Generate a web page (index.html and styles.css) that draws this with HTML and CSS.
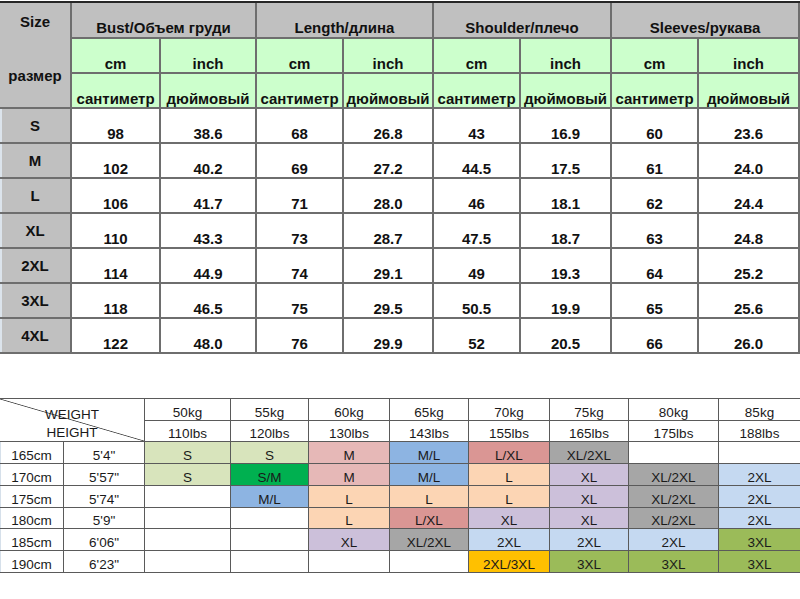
FILE: index.html
```html
<!DOCTYPE html>
<html>
<head>
<meta charset="utf-8">
<link rel="stylesheet" href="styles.css">
</head>
<body>
<div class="size-table">
  <div class="c-size"><span>Size</span><span>размер</span></div>
  <div class="c-group">Bust/Объем груди</div>
  <div class="c-group">Length/длина</div>
  <div class="c-group">Shoulder/плечо</div>
  <div class="c-group">Sleeves/рукава</div>
  <div class="c-unit">cm</div><div class="c-unit">inch</div>
  <div class="c-unit">cm</div><div class="c-unit">inch</div>
  <div class="c-unit">cm</div><div class="c-unit">inch</div>
  <div class="c-unit">cm</div><div class="c-unit">inch</div>
  <div class="c-unit">сантиметр</div><div class="c-unit">дюймовый</div>
  <div class="c-unit">сантиметр</div><div class="c-unit">дюймовый</div>
  <div class="c-unit">сантиметр</div><div class="c-unit">дюймовый</div>
  <div class="c-unit">сантиметр</div><div class="c-unit">дюймовый</div>

  <div class="c-label">S</div><div class="c-num">98</div><div class="c-num">38.6</div><div class="c-num">68</div><div class="c-num">26.8</div><div class="c-num">43</div><div class="c-num">16.9</div><div class="c-num">60</div><div class="c-num">23.6</div>
  <div class="c-label">M</div><div class="c-num">102</div><div class="c-num">40.2</div><div class="c-num">69</div><div class="c-num">27.2</div><div class="c-num">44.5</div><div class="c-num">17.5</div><div class="c-num">61</div><div class="c-num">24.0</div>
  <div class="c-label">L</div><div class="c-num">106</div><div class="c-num">41.7</div><div class="c-num">71</div><div class="c-num">28.0</div><div class="c-num">46</div><div class="c-num">18.1</div><div class="c-num">62</div><div class="c-num">24.4</div>
  <div class="c-label">XL</div><div class="c-num">110</div><div class="c-num">43.3</div><div class="c-num">73</div><div class="c-num">28.7</div><div class="c-num">47.5</div><div class="c-num">18.7</div><div class="c-num">63</div><div class="c-num">24.8</div>
  <div class="c-label">2XL</div><div class="c-num">114</div><div class="c-num">44.9</div><div class="c-num">74</div><div class="c-num">29.1</div><div class="c-num">49</div><div class="c-num">19.3</div><div class="c-num">64</div><div class="c-num">25.2</div>
  <div class="c-label">3XL</div><div class="c-num">118</div><div class="c-num">46.5</div><div class="c-num">75</div><div class="c-num">29.5</div><div class="c-num">50.5</div><div class="c-num">19.9</div><div class="c-num">65</div><div class="c-num">25.6</div>
  <div class="c-label">4XL</div><div class="c-num">122</div><div class="c-num">48.0</div><div class="c-num">76</div><div class="c-num">29.9</div><div class="c-num">52</div><div class="c-num">20.5</div><div class="c-num">66</div><div class="c-num">26.0</div>
</div>

<div class="wh-table">
  <div class="w-corner"><span>WEIGHT</span><span>HEIGHT</span></div>
  <div class="w">50kg</div><div class="w">55kg</div><div class="w">60kg</div><div class="w">65kg</div><div class="w">70kg</div><div class="w">75kg</div><div class="w">80kg</div><div class="w">85kg</div>
  <div class="w">110lbs</div><div class="w">120lbs</div><div class="w">130lbs</div><div class="w">143lbs</div><div class="w">155lbs</div><div class="w">165lbs</div><div class="w">175lbs</div><div class="w">188lbs</div>

  <div class="w first">165cm</div><div class="w">5'4"</div>
  <div class="w s">S</div><div class="w s">S</div><div class="w m">M</div><div class="w ml">M/L</div><div class="w lxl">L/XL</div><div class="w xl2">XL/2XL</div><div class="w"></div><div class="w"></div>

  <div class="w first">170cm</div><div class="w">5'57"</div>
  <div class="w s">S</div><div class="w sm">S/M</div><div class="w m">M</div><div class="w ml">M/L</div><div class="w l">L</div><div class="w xl">XL</div><div class="w xl2">XL/2XL</div><div class="w x2">2XL</div>

  <div class="w first">175cm</div><div class="w">5'74"</div>
  <div class="w"></div><div class="w ml">M/L</div><div class="w l">L</div><div class="w l">L</div><div class="w l">L</div><div class="w xl">XL</div><div class="w xl2">XL/2XL</div><div class="w x2">2XL</div>

  <div class="w first">180cm</div><div class="w">5'9"</div>
  <div class="w"></div><div class="w"></div><div class="w l">L</div><div class="w lxl">L/XL</div><div class="w xl">XL</div><div class="w xl">XL</div><div class="w xl2">XL/2XL</div><div class="w x2">2XL</div>

  <div class="w first">185cm</div><div class="w">6'06"</div>
  <div class="w"></div><div class="w"></div><div class="w xl">XL</div><div class="w xl2">XL/2XL</div><div class="w x2">2XL</div><div class="w x2">2XL</div><div class="w x2">2XL</div><div class="w x3">3XL</div>

  <div class="w first">190cm</div><div class="w">6'23"</div>
  <div class="w"></div><div class="w"></div><div class="w"></div><div class="w"></div><div class="w x23">2XL/3XL</div><div class="w x3">3XL</div><div class="w x3">3XL</div><div class="w x3">3XL</div>
</div>
</body>
</html>
```
FILE: styles.css
```css
html, body {
  margin: 0;
  padding: 0;
  background: #ffffff;
}

body {
  font-family: "Liberation Sans", Arial, sans-serif;
  color: #111;
  width: 800px;
  height: 599px;
  overflow: hidden;
}

/* ---------- top size table ---------- */
.size-table {
  margin-top: 1px;
  display: grid;
  grid-template-columns: 70px 87px 94px 85px 88px 85px 89px 85px 99px;
  grid-template-rows: 34px 33px 33px repeat(7, 33px);
  gap: 2px;
  background: #6e6e6e;
  border-top: 2px solid #262626;
  padding: 0 2px 2px 0;
  width: 798px;
  font-weight: bold;
  font-size: 15px;
  line-height: 17px;
}

.size-table > div {
  display: flex;
  justify-content: center;
  text-align: center;
  white-space: nowrap;
}

.c-size {
  grid-row: span 3;
  background: #c0c0c0;
  flex-direction: column;
  align-items: center;
  justify-content: flex-start !important;
  padding-top: 10px;
  gap: 37px;
}

.c-group {
  grid-column: span 2;
  background: #c0c0c0;
  align-items: flex-end;
  padding-bottom: 1px;
}

.c-unit {
  background: #ccffcc;
  align-items: flex-end;
  padding-bottom: 0;
}

.c-label {
  background: #c0c0c0;
  align-items: center;
  padding-bottom: 1px;
  box-shadow: inset 2px 0 0 #dce4ec;
}

.c-num {
  background: #ffffff;
  align-items: flex-end;
  padding-bottom: 0;
}

/* ---------- bottom weight/height table ---------- */
.wh-table {
  margin-top: 44px;
  display: grid;
  grid-template-columns: 63px 80px 85px 77px 80px 78px 80px 78px 89px 81px;
  grid-template-rows: 21px 20px 21px 21px 21px 20px 21px 21px;
  gap: 1px;
  background: #5a5a5a;
  border-top: 1px solid #5a5a5a;
  padding-bottom: 1px;
  width: 800px;
  font-size: 13.5px;
  line-height: 15px;
  font-weight: normal;
}

.w {
  background: #ffffff;
  display: flex;
  align-items: flex-end;
  justify-content: center;
  white-space: nowrap;
  color: #1a1a1a;
}

.first {
  box-shadow: inset 1px 0 0 #d6e0ea;
}

.w-corner {
  grid-column: span 2;
  grid-row: span 2;
  background: #ffffff linear-gradient(to bottom left, transparent calc(50% - 0.8px), #4a4a4a 50%, transparent calc(50% + 0.8px));
  display: flex;
  flex-direction: column;
  align-items: center;
  padding-top: 7px;
  line-height: 18px;
  color: #1a1a1a;
}

.s   { background: #d8e4bc; }
.sm  { background: #00b050; }
.m   { background: #e6b8b7; }
.ml  { background: #8db4e2; }
.lxl { background: #da9694; }
.xl2 { background: #a6a6a6; }
.l   { background: #fcd5b4; }
.xl  { background: #ccc0da; }
.x2  { background: #c5d9f1; }
.x3  { background: #9bbb59; }
.x23 { background: #ffc000; }
```
